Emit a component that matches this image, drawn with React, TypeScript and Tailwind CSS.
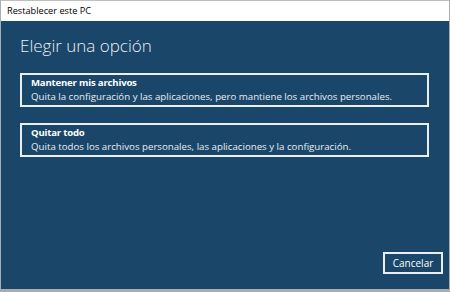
const Option = ({ title, desc }: { title: string; desc: string }) => (
  <button className="flex h-[34px] w-[409px] flex-col justify-center border-2 border-[#e8eef3] px-[9px] text-left leading-none">
    <span className="text-[9.6px] font-bold tracking-[-0.2px] text-white">{title}</span>
    <span className="mt-[4px] text-[9.7px] text-[#e6edf3]">{desc}</span>
  </button>
)

export default function App() {
  return (
    <div
      className="flex h-[292px] w-[450px] flex-col bg-[#a9adb1] px-[1px] pb-[3px]"
      style={{ fontFamily: '"Open Sans", "Noto Sans", sans-serif' }}
    >
      {/* Title bar */}
      <div className="flex h-[21px] items-center border-t border-[#bfbfbf] bg-white pl-[6px] text-[9.2px] text-black">
        Restablecer este PC
      </div>

      {/* Body */}
      <div className="flex flex-1 flex-col bg-[#1a4669] pl-[19px] pr-[6px]">
        <h1 className="mt-[16px] text-[17px] font-light leading-none text-[#e9eff4]">
          Elegir una opción
        </h1>

        <div className="mt-[19px] flex flex-col gap-[16px]">
          <Option
            title="Mantener mis archivos"
            desc="Quita la configuración y las aplicaciones, pero mantiene los archivos personales."
          />
          <Option
            title="Quitar todo"
            desc="Quita todos los archivos personales, las aplicaciones y la configuración."
          />
        </div>

        <div className="mt-auto mb-[15px] flex justify-end">
          <button className="h-[22px] w-[60px] border-2 border-[#e8eef3] text-[10px] text-white">
            Cancelar
          </button>
        </div>
      </div>
    </div>
  )
}
